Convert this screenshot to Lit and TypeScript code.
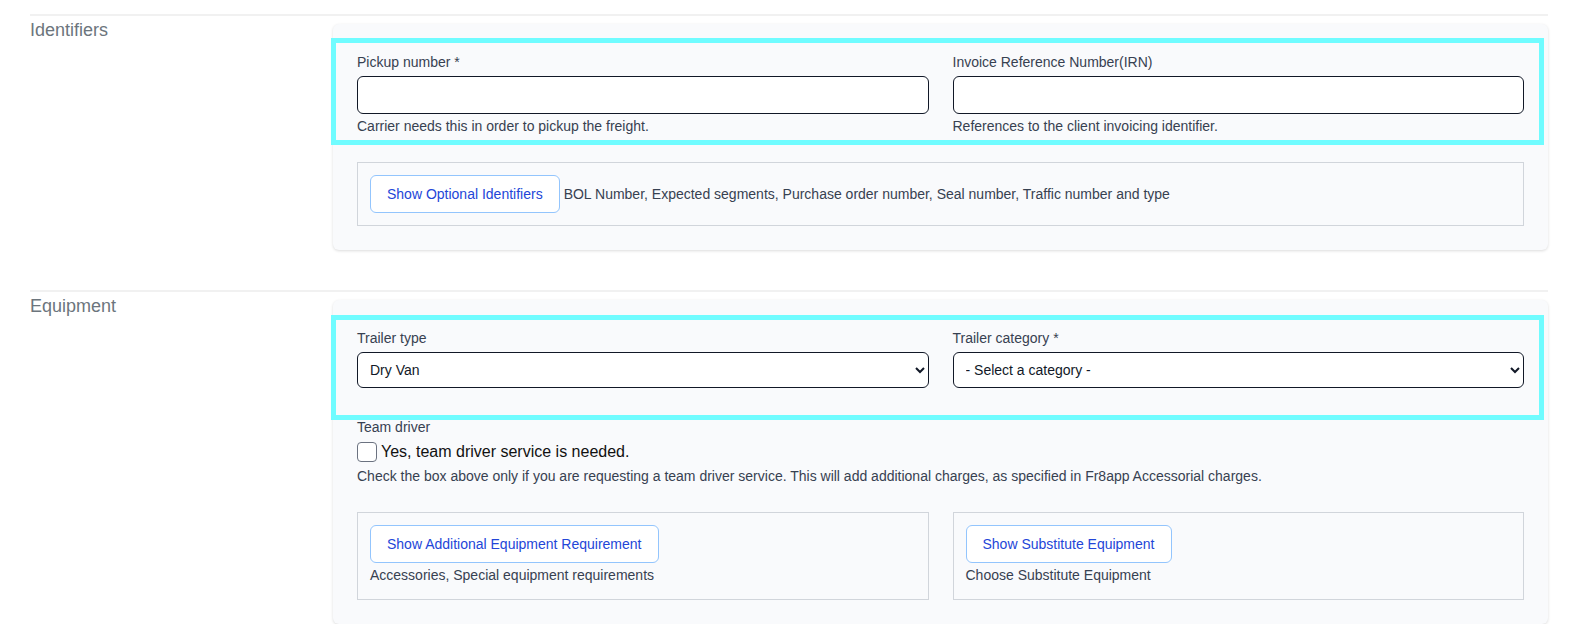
import { LitElement, html, css } from 'lit';
import { customElement } from 'lit/decorators.js';

@customElement('app-root')
export class AppRoot extends LitElement {
  static styles = css`
    :host {
      display: block;
      padding: 14px 41px 0 30px;
      font-family: 'Liberation Sans', Arial, sans-serif;
      font-size: 14px;
      line-height: 17px;
      color: #374151;
      background: #fff;
    }
    * {
      box-sizing: border-box;
    }
    .section {
      display: grid;
      grid-template-columns: 303px 1215px;
      border-top: 2px solid #f1f1f1;
    }
    .section + .section {
      margin-top: 40px;
    }
    .title {
      font-size: 18px;
      line-height: 24px;
      color: #6c757d;
      padding-top: 2px;
    }
    .card {
      margin-top: 8px;
      padding: 30px 24px 24px;
      background: #f9fafc;
      border-radius: 6px;
      box-shadow: 0 1px 3px rgba(0, 0, 0, 0.14);
    }
    .marked {
      position: relative;
    }
    .marker {
      position: absolute;
      left: -26px;
      right: -20px;
      top: -16px;
      bottom: -10px;
      border: 5px solid #70fcff;
      pointer-events: none;
    }
    .marker.tall {
      top: -15px;
      bottom: -32px;
    }
    .cols {
      display: grid;
      grid-template-columns: 1fr 1fr;
      column-gap: 24px;
    }
    .field label {
      display: block;
      margin-bottom: 5px;
    }
    input.text,
    select {
      display: block;
      width: 100%;
      background-color: #fff;
      border: 1px solid #111827;
      border-radius: 6px;
      font: inherit;
      color: #111827;
    }
    input.text {
      height: 38px;
    }
    select {
      height: 36px;
      padding: 0 8px;
    }
    .help {
      margin-top: 4px;
    }
    .box {
      border: 1px solid #d1d5db;
      padding: 12px;
    }
    .box.inline {
      margin-top: 27px;
      height: 64px;
      display: flex;
      align-items: center;
      gap: 4px;
    }
    .btn {
      height: 38px;
      padding: 0 16px;
      background: #fff;
      border: 1px solid #93c5fd;
      border-radius: 6px;
      color: #2346d8;
      font: inherit;
    }
    .team {
      margin-top: 31px;
    }
    .check {
      display: flex;
      align-items: center;
      gap: 4px;
      margin-top: 4px;
      font-size: 16px;
      line-height: 24px;
      color: #111;
    }
    .check input {
      appearance: none;
      width: 20px;
      height: 20px;
      margin: 0;
      background: #fff;
      border: 1px solid #6b7280;
      border-radius: 4px;
    }
    .note {
      margin-top: 4px;
    }
    .boxes {
      margin-top: 27px;
    }
    .boxes .box {
      height: 88px;
    }
    .boxes .btn {
      display: block;
      margin-bottom: 4px;
    }
  `;

  render() {
    return html`
      <div class="section">
        <div class="title">Identifiers</div>
        <div class="card">
          <div class="marked">
            <div class="cols">
              <div class="field">
                <label>Pickup number *</label>
                <input class="text" type="text" />
                <div class="help">Carrier needs this in order to pickup the freight.</div>
              </div>
              <div class="field">
                <label>Invoice Reference Number(IRN)</label>
                <input class="text" type="text" />
                <div class="help">References to the client invoicing identifier.</div>
              </div>
            </div>
            <div class="marker"></div>
          </div>
          <div class="box inline">
            <button class="btn">Show Optional Identifiers</button>
            <span>BOL Number, Expected segments, Purchase order number, Seal number, Traffic number and type</span>
          </div>
        </div>
      </div>
      <div class="section">
        <div class="title">Equipment</div>
        <div class="card">
          <div class="marked">
            <div class="cols">
              <div class="field">
                <label>Trailer type</label>
                <select><option>Dry Van</option></select>
              </div>
              <div class="field">
                <label>Trailer category *</label>
                <select><option>- Select a category -</option></select>
              </div>
            </div>
            <div class="marker tall"></div>
          </div>
          <div class="team">Team driver</div>
          <label class="check"><input type="checkbox" /> Yes, team driver service is needed.</label>
          <div class="note">
            Check the box above only if you are requesting a team driver service. This will add additional charges, as
            specified in Fr8app Accessorial charges.
          </div>
          <div class="cols boxes">
            <div class="box">
              <button class="btn">Show Additional Equipment Requirement</button>
              Accessories, Special equipment requirements
            </div>
            <div class="box">
              <button class="btn">Show Substitute Equipment</button>
              Choose Substitute Equipment
            </div>
          </div>
        </div>
      </div>
    `;
  }
}
